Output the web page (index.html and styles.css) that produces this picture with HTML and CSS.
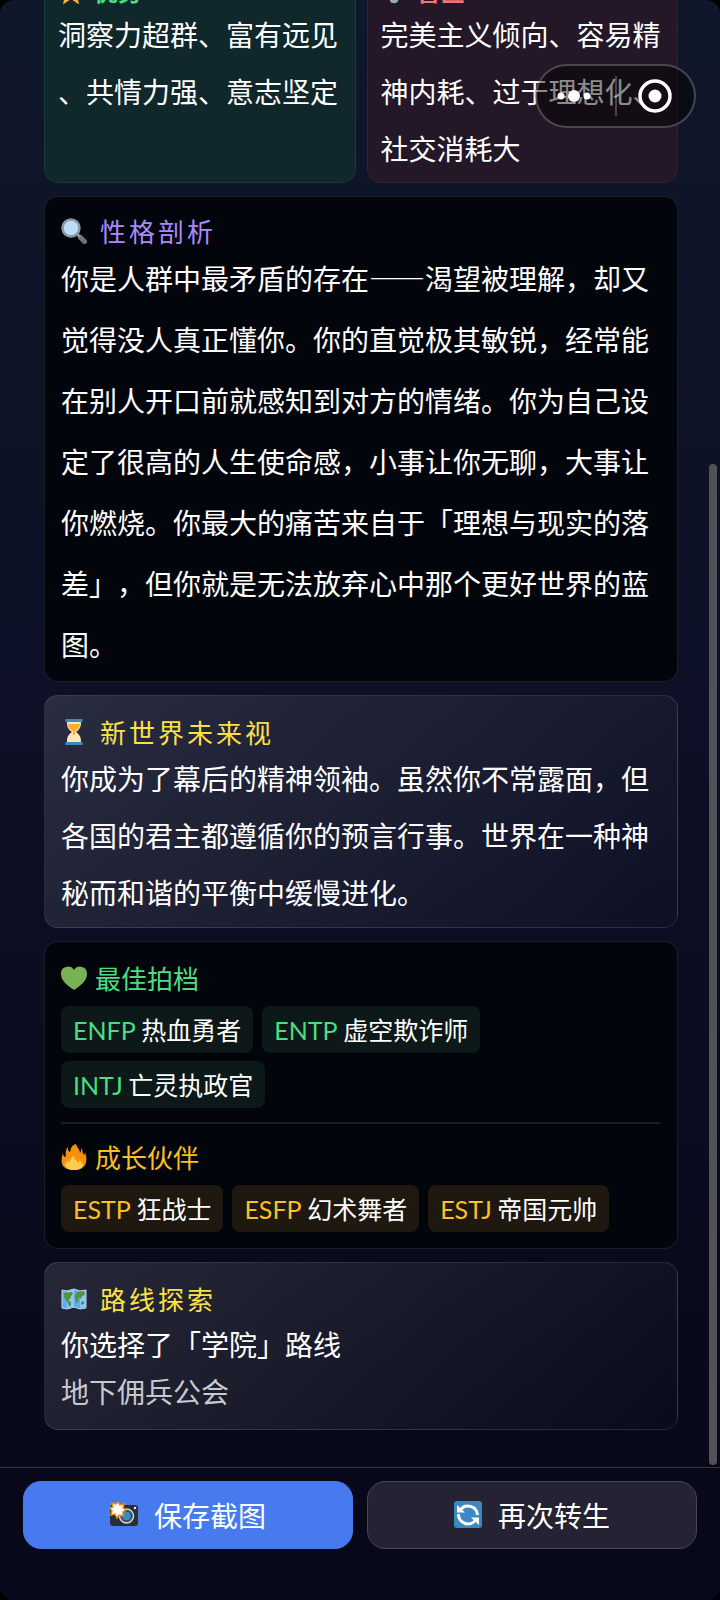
FILE: index.html
```html
<!DOCTYPE html>
<html lang="zh-CN">
<head>
<meta charset="utf-8">
<meta name="viewport" content="width=device-width, initial-scale=1">
<title>转生结果</title>
<link rel="stylesheet" href="styles.css">
</head>
<body>
<div class="app">
  <main class="results">
    <div class="traits">
      <section class="card trait trait-good">
        <h2 class="trait-title"><svg class="icon" viewBox="0 0 26 26"><path fill="#ffac33" d="M13 1l3.600 8 8.400.800-6.200 5.800 2.200 11-8-5.600-8 5.600 2.200-11L1 9.800 9.400 9z"/></svg>优势</h2>
        <p class="text">洞察力超群、富有远见、共情力强、意志坚定</p>
      </section>
      <section class="card trait trait-bad">
        <h2 class="trait-title"><svg class="icon" viewBox="0 0 26 26"><path fill="#99aab5" d="M13 1c6 0 9 4 9 9 0 4-2 6-4 8l-1 5c-1 3-7 3-8 0l-1-5c-2-2-4-4-4-8 0-5 3-9 9-9z"/></svg>盲区</h2>
        <p class="text">完美主义倾向、容易精神内耗、过于理想化、社交消耗大</p>
      </section>
    </div>

    <section class="card dark analysis">
      <h2 class="title violet"><svg class="icon" viewBox="0 0 26 26"><path stroke="#66757f" stroke-width="5" stroke-linecap="round" d="M19.500 19.500l4 4"/><path stroke="#8899a6" stroke-width="3" d="M15 15l4 4"/><circle cx="10" cy="10" r="8.500" fill="#bbddf5" stroke="#8899a6" stroke-width="2.500"/></svg>性格剖析</h2>
      <p class="text">你是人群中最矛盾的存在——渴望被理解，却又觉得没人真正懂你。你的直觉极其敏锐，经常能在别人开口前就感知到对方的情绪。你为自己设定了很高的人生使命感，小事让你无聊，大事让你燃烧。你最大的痛苦来自于「理想与现实的落差」，但你就是无法放弃心中那个更好世界的蓝图。</p>
    </section>

    <section class="card glass">
      <h2 class="title gold"><svg class="icon" viewBox="0 0 26 26"><path fill="#ffe8b6" d="M6 3h14c0 5-1 7-5 10 4 3 5 5 5 10H6c0-5 1-7 5-10C7 10 6 8 6 3z"/><path fill="#ffac33" d="M7 5h12c0 3-2 6-5 7.500V16h-2v-3.500C9 11 7 8 7 5z"/><path fill="#3b88c3" d="M4.500 0h17v3h-17zM4.500 23h17v3h-17z"/></svg>新世界未来视</h2>
      <p class="text">你成为了幕后的精神领袖。虽然你不常露面，但各国的君主都遵循你的预言行事。世界在一种神秘而和谐的平衡中缓慢进化。</p>
    </section>

    <section class="card dark partners">
      <h2 class="title compact green"><svg class="icon" viewBox="0 0 26 26"><path fill="#77b255" d="M13 5C11 1 7 1 5 2 1 3 0 6 0 9c0 7 7 12 13 16 6-4 13-9 13-16 0-3-1-6-5-7-2-1-6-1-8 3z"/></svg>最佳拍档</h2>
      <ul class="tags good">
        <li class="tag"><b class="code">ENFP</b> 热血勇者</li>
        <li class="tag"><b class="code">ENTP</b> 虚空欺诈师</li>
        <li class="tag"><b class="code">INTJ</b> 亡灵执政官</li>
      </ul>
      <hr class="divider">
      <h2 class="title compact amber"><svg class="icon" viewBox="0 0 26 26"><path fill="#f4900c" d="M15 0c1 4 4 5 4 9 1-1 1-3 1-5 2 2 1 5 3 7 1-1 1-2 1-3 3 8 2 18-11 18S-1 18 2 9c0 2 1 4 2 4 2-1-1-6 3-10 0 3 0 4 2 5 1-2 0-6 6-8z"/><path fill="#ffcc4d" d="M13 12c0 4 3 4 5 7 0-2 0-3 1-4 0 3 3 3 3 6-2 7-16 7-18 0 0-3 2-3 3-5 1 1 0 2 1 3 2-3 1-5 5-7z"/></svg>成长伙伴</h2>
      <ul class="tags grow">
        <li class="tag"><b class="code">ESTP</b> 狂战士</li>
        <li class="tag"><b class="code">ESFP</b> 幻术舞者</li>
        <li class="tag"><b class="code">ESTJ</b> 帝国元帅</li>
      </ul>
    </section>

    <section class="card glass route">
      <h2 class="title gold"><svg class="icon" viewBox="0 0 26 26"><path fill="#5dadec" stroke="#bbddf5" d="M1 4l5 1 7-2 6 2 6-1v18l-6 1-6-2-7 2-5-1z"/><path fill="#88c9f9" d="M6 5l7-2v18l-7 2zM19 5l5-1v17l-5 1z"/><path fill="#5c913b" d="M3 7l8-1 1 2-2 2-1 3-2 1 3 2v3l-2 2-1-4-2-3-2-3zM14 9l2-3 7-1 1 4-3 1-1 3-2-2-1 5-2 1-1-5zM20 16l3-1v3l-3 1z"/></svg>路线探索</h2>
      <p class="text snug">你选择了「学院」路线</p>
      <p class="text snug muted">地下佣兵公会</p>
    </section>
    <div class="scrollbar"></div>
  </main>

  <footer class="actions">
    <button class="btn primary" type="button"><svg class="icon" viewBox="0 0 28 28"><rect y="4" width="28" height="21" rx="3" fill="#292f33"/><circle cx="16.500" cy="15" r="7" fill="#3b88c3" stroke="#292f33" stroke-width="2"/><circle cx="16.500" cy="15" r="7" fill="none" stroke="#ccd6dd" stroke-width="1.500"/><circle cx="16.500" cy="15" r="5" fill="#3b88c3" stroke="#292f33"/><circle cx="25" cy="7" r="1.200" fill="#fff"/><path fill="#fff" stroke="#f4900c" stroke-width="1.500" d="M8 1l2 3 4-1-1 4 3 2-3 2 0 4-4-1-2 3-2-4-4 1 1-4-2-3 3-1-1-4 4 1z"/></svg>保存截图</button>
    <button class="btn" type="button"><svg class="icon" viewBox="0 0 28 28"><rect width="28" height="27" rx="3" fill="#3b88c3"/><g fill="none" stroke="#fff" stroke-width="3"><path d="M6 9.500a9.500 9.500 0 0 1 17.500 4.500"/><path d="M22 18.500A9.500 9.500 0 0 1 4.500 13"/></g><path fill="#fff" d="M3 4v7.500h8zM25 24v-7.500h-8z"/></svg>再次转生</button>
  </footer>

  <div class="capsule">
    <button class="capsule-btn" type="button" aria-label="更多"><svg class="dots" viewBox="0 0 36 14"><g fill="#fff"><circle cx="3" cy="7" r="3.500"/><circle cx="16" cy="7" r="6"/><circle cx="29" cy="7" r="3.500"/></g></svg></button>
    <span class="capsule-line"></span>
    <button class="capsule-btn" type="button" aria-label="关闭"><svg class="target" viewBox="0 0 34 34"><circle cx="17" cy="17" r="15" fill="none" stroke="#fff" stroke-width="3.500"/><circle cx="17" cy="17" r="6.500" fill="#fff"/></svg></button>
  </div>
</div>
</body>
</html>
```

FILE: styles.css
```css
* {
  box-sizing: border-box;
  margin: 0;
  padding: 0;
}

body {
  background: #000;
  color: #fff;
  font-family: "Noto Sans CJK SC", sans-serif;
  font-size: 28px;
  text-spacing-trim: space-all;
}

.app {
  position: relative;
  display: flex;
  flex-direction: column;
  height: 100vh;
  overflow: hidden;
  border-radius: 14px;
  background: linear-gradient(180deg, #0f172a 0%, #0d1026 45%, #080a1b 85%, #07081a 100%);
}

.results {
  position: relative;
  flex: 1;
  min-height: 0;
  display: flex;
  flex-direction: column;
  justify-content: flex-end;
  gap: 13px;
  padding: 0 42px 37px 44px;
  overflow: hidden;
}

.card {
  flex: none;
  padding: 18px 16px 6px;
  border: 1px solid rgba(255, 255, 255, 0.1);
  border-radius: 14px;
}

.dark {
  background: #03050d;
}

.glass {
  background: linear-gradient(135deg, rgba(255, 255, 255, 0.12), rgba(255, 255, 255, 0.01));
}

.traits {
  flex: none;
  display: grid;
  grid-template-columns: 1fr 1fr;
  gap: 11px;
}

.trait {
  padding: 13px 13px 5px;
}

.trait-good {
  background: #10272b;
  border-color: #183c38;
}

.trait-bad {
  background: #241727;
  border-color: #38202d;
}

.trait-title {
  display: flex;
  align-items: center;
  gap: 10px;
  font-size: 24px;
  line-height: 30px;
}

.trait-good .trait-title {
  color: #4ade80;
}

.trait-bad .trait-title {
  color: #f87171;
}

.icon {
  flex: none;
  width: 26px;
  height: 26px;
}

.title {
  display: flex;
  align-items: center;
  gap: 13px;
  font-size: 26px;
  font-weight: 400;
  line-height: 36px;
  letter-spacing: 3px;
}

.title.compact {
  gap: 8px;
  letter-spacing: 0;
}

.violet { color: #a78bfa; }
.gold { color: #fde047; }
.green { color: #4ade80; }
.amber { color: #fbbf24; }

.text {
  line-height: 57px;
  line-break: anywhere;
}

.analysis {
  padding-top: 17px;
}

.analysis .title {
  line-height: 34px;
}

.analysis .text {
  line-height: 61px;
}

.text.snug {
  line-height: 47px;
}

.muted {
  color: #c8c8cf;
}

.partners {
  padding-bottom: 16px;
}

.route {
  padding-bottom: 14px;
}

.route .title {
  margin-bottom: 4px;
}

.tags {
  display: flex;
  flex-wrap: wrap;
  gap: 8px 9px;
  margin-top: 10px;
  list-style: none;
}

.tag {
  padding: 0 12px;
  border-radius: 8px;
  font-size: 25px;
  line-height: 47px;
}

.code {
  font-family: Lato, sans-serif;
  font-weight: 400;
  line-height: 1;
}

.good .tag { background: #0c1918; }
.good .code { color: #4ade80; }
.grow .tag { background: #1e1810; }
.grow .code { color: #fbbf24; }

.divider {
  height: 2px;
  margin: 14px 0 15px;
  border: 0;
  border-radius: 1px;
  background: #1c1c26;
}

.scrollbar {
  position: absolute;
  top: 31.6%;
  right: 3px;
  bottom: 2px;
  width: 8px;
  border-radius: 4px;
  background: #515158;
}

.actions {
  flex: none;
  display: grid;
  grid-template-columns: 1fr 1fr;
  gap: 14px;
  padding: 13px 23px 51px;
  border-top: 1px solid #343442;
  background: #07081a;
}

.btn {
  display: flex;
  align-items: center;
  justify-content: center;
  gap: 16px;
  height: 68px;
  border: 1px solid #464552;
  border-radius: 18px;
  background: #242233;
  color: #fff;
  font: inherit;
}

.btn .icon {
  width: 28px;
  height: 28px;
}

.primary {
  border-color: #467aee;
  background: #467aee;
}

.capsule {
  position: absolute;
  top: 64px;
  right: 24px;
  display: flex;
  align-items: center;
  width: 161px;
  height: 64px;
  border: 2px solid rgba(255, 255, 255, 0.24);
  border-radius: 32px;
  background: rgba(0, 0, 0, 0.45);
}

.capsule-btn {
  flex: 1;
  display: flex;
  align-items: center;
  justify-content: center;
  height: 100%;
  border: 0;
  background: none;
}

.capsule-line {
  width: 2px;
  height: 40px;
  background: rgba(255, 255, 255, 0.24);
}

.dots {
  width: 36px;
  height: 14px;
  overflow: visible;
}

.target {
  width: 34px;
  height: 34px;
}
```
